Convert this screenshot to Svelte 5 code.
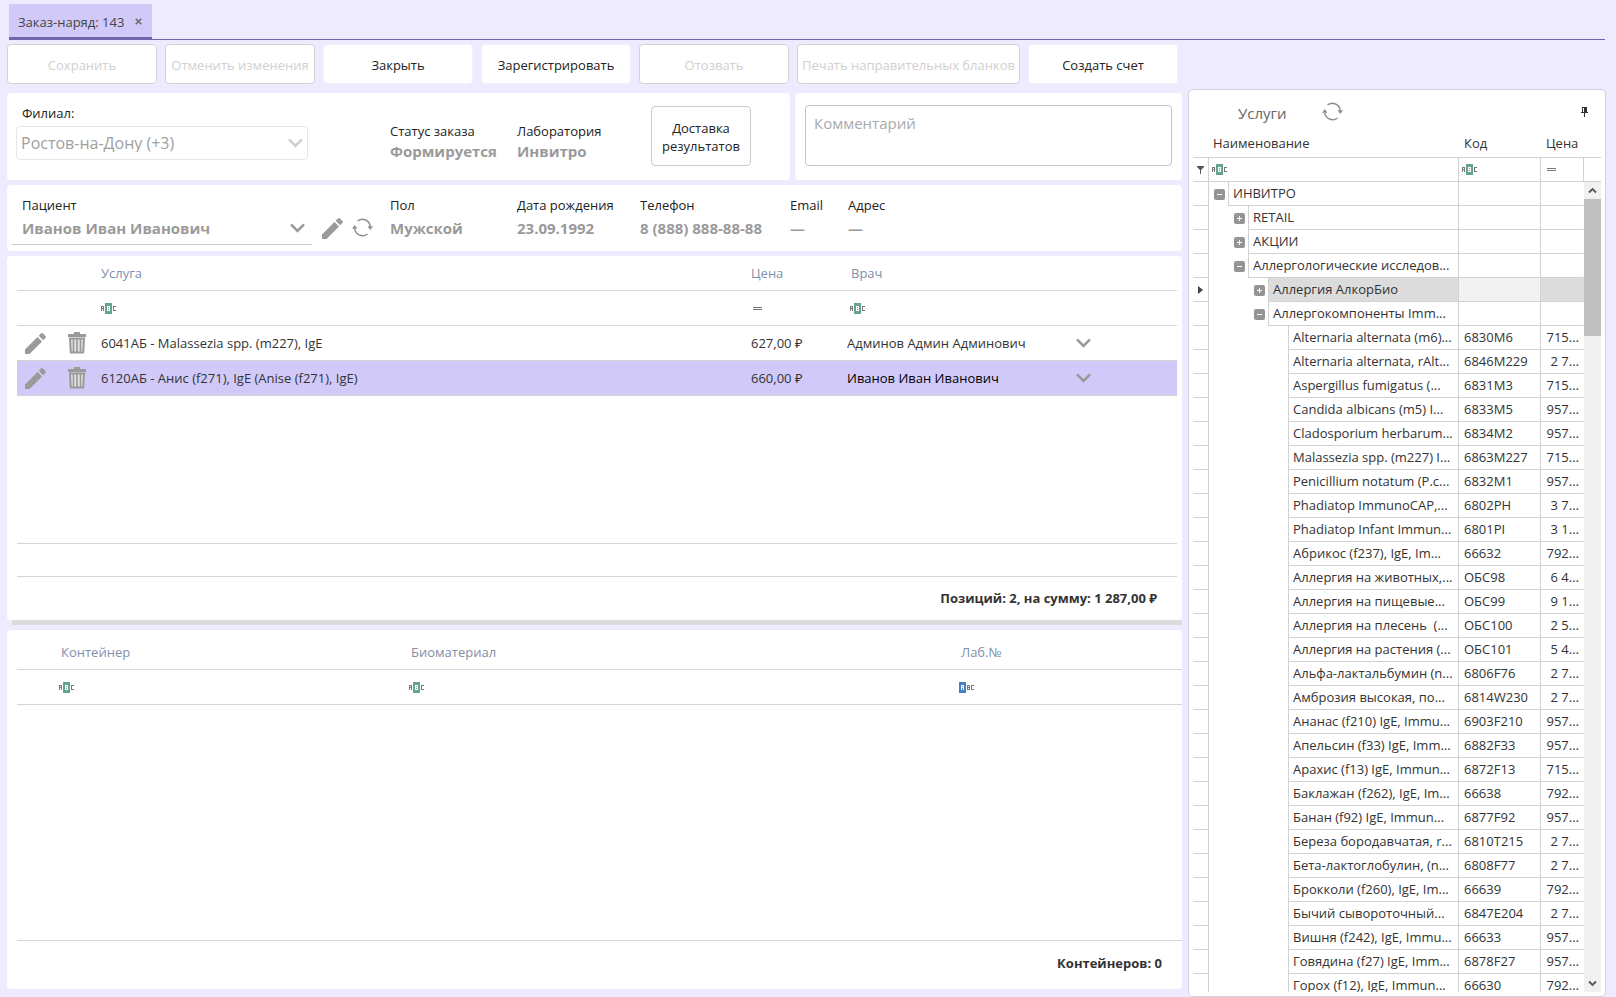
<script>
  const toolbar = [
    { text: 'Сохранить', off: true },
    { text: 'Отменить изменения', off: true },
    { text: 'Закрыть' },
    { text: 'Зарегистрировать' },
    { text: 'Отозвать', off: true },
    { text: 'Печать направительных бланков', off: true, wide: true },
    { text: 'Создать счет' }
  ];

  const services = [
    { name: '6041АБ - Malassezia spp. (m227), IgE', price: '627,00 ₽', doctor: 'Админов Админ Админович' },
    { name: '6120АБ - Анис (f271), IgE (Anise (f271), IgE)', price: '660,00 ₽', doctor: 'Иванов Иван Иванович', selected: true }
  ];

  const tree = [
    ['ИНВИТРО', '', '', 0, '-'],
    ['RETAIL', '', '', 1, '+'],
    ['АКЦИИ', '', '', 1, '+'],
    ['Аллергологические исследов...', '', '', 1, '-'],
    ['Аллергия АлкорБио', '', '', 2, '+'],
    ['Аллергокомпоненты Imm...', '', '', 2, '-'],
    ['Alternaria alternata (m6)...', '6830M6', '715...', 3],
    ['Alternaria alternata, rAlt...', '6846M229', '2 7...', 3],
    ['Aspergillus fumigatus (...', '6831M3', '715...', 3],
    ['Candida albicans (m5) I...', '6833M5', '957...', 3],
    ['Cladosporium herbarum...', '6834M2', '957...', 3],
    ['Malassezia spp. (m227) I...', '6863M227', '715...', 3],
    ['Penicillium notatum (P.c...', '6832M1', '957...', 3],
    ['Phadiatop ImmunoCAP,...', '6802PH', '3 7...', 3],
    ['Phadiatop Infant Immun...', '6801PI', '3 1...', 3],
    ['Абрикос (f237), IgE, Im...', '66632', '792...', 3],
    ['Аллергия на животных,...', 'ОБС98', '6 4...', 3],
    ['Аллергия на пищевые...', 'ОБС99', '9 1...', 3],
    ['Аллергия на плесень  (...', 'ОБС100', '2 5...', 3],
    ['Аллергия на растения (...', 'ОБС101', '5 4...', 3],
    ['Альфа-лактальбумин (n...', '6806F76', '2 7...', 3],
    ['Амброзия высокая, по...', '6814W230', '2 7...', 3],
    ['Ананас (f210) IgE, Immu...', '6903F210', '957...', 3],
    ['Апельсин (f33) IgE, Imm...', '6882F33', '957...', 3],
    ['Арахис (f13) IgE, Immun...', '6872F13', '715...', 3],
    ['Баклажан (f262), IgE, Im...', '66638', '792...', 3],
    ['Банан (f92) IgE, Immun...', '6877F92', '957...', 3],
    ['Береза бородавчатая, r...', '6810T215', '2 7...', 3],
    ['Бета-лактоглобулин, (n...', '6808F77', '2 7...', 3],
    ['Брокколи (f260), IgE, Im...', '66639', '792...', 3],
    ['Бычий сывороточный...', '6847E204', '2 7...', 3],
    ['Вишня (f242), IgE, Immu...', '66633', '957...', 3],
    ['Говядина (f27) IgE, Imm...', '6878F27', '957...', 3],
    ['Горох (f12), IgE, Immun...', '66630', '792...', 3]
  ].map(([name, code, price, level, sign]) => ({ name, code, price, level, sign }));
  const current = 4;
</script>

{#snippet pencil()}
  <svg width="21" height="21" viewBox="0 0 21 21" fill="#9a9a9a" aria-hidden="true">
    <path d="M0 21v-4.500L12.500 4l4.500 4.500L4.500 21zM13.700 2.800l2.200-2.200q1-1 2.100 0l2.400 2.400q1 1 0 2.100l-2.200 2.200z" />
  </svg>
{/snippet}

{#snippet trash()}
  <svg width="18" height="22" viewBox="0 0 18 22" fill="none" aria-hidden="true">
    <path d="M6 0h6v2h6v3H0V2h6z" fill="#9a9a9a" />
    <path d="M2 6.500h14l-.8 14H2.800z" fill="#e2e2e2" stroke="#9a9a9a" stroke-width="2" />
    <path d="M5.500 6v14M9 6v14M12.500 6v14" stroke="#9a9a9a" stroke-width="1.600" />
  </svg>
{/snippet}

{#snippet refresh()}
  <svg width="21" height="19" viewBox="0 0 21 19" fill="none" aria-hidden="true">
    <path d="M5.500 3A8 8 0 0 1 18.300 8.500M15.500 16A8 8 0 0 1 2.700 10.500" stroke="#8f8f8f" stroke-width="1.500" />
    <path d="M15.500 8.200h5.500l-2.700 3.800zM0 10.800h5.500L2.700 7z" fill="#8f8f8f" />
  </svg>
{/snippet}

{#snippet chevron(color)}
  <svg width="15" height="10" viewBox="0 0 15 10" fill="none" aria-hidden="true">
    <path d="M1 1.300l6.500 6.500L14 1.300" stroke={color} stroke-width="2.600" />
  </svg>
{/snippet}

{#snippet contains()}
  <svg width="16" height="11" viewBox="0 0 16 11" fill="none" shape-rendering="crispEdges" aria-hidden="true">
    <path d="M.5 8V3.500h2V8M.5 5.500h2M15 3.500h-2.500v4H15" stroke="#777" />
    <rect x="4" width="7" height="11" rx="1" fill="#63a58d" />
    <path d="M6 3h3v5H6zM7 4v1h1V4zM7 6v1h1V6z" fill="#fff" fill-rule="evenodd" />
  </svg>
{/snippet}

{#snippet startsWith()}
  <svg width="16" height="11" viewBox="0 0 16 11" fill="none" shape-rendering="crispEdges" aria-hidden="true">
    <rect width="7" height="11" rx="1" fill="#467fbd" />
    <path d="M2.500 8V3.500h2V8M2.500 5.500h2" stroke="#fff" />
    <path d="M8.500 3.500h2v4h-2zM8.500 5.500h2M15 3.500h-2.500v4H15" stroke="#777" />
  </svg>
{/snippet}

{#snippet equals()}
  <svg width="9" height="3" viewBox="0 0 9 3" aria-hidden="true">
    <path d="M0 0h9v1H0zM0 2h9v1H0z" fill="#777" />
  </svg>
{/snippet}

{#snippet field(label, value)}
  <div class="field"><span>{label}</span><b>{value}</b></div>
{/snippet}

<div class="app">
  <nav class="tabs">
    <div class="tab">
      <a href="#order">Заказ-наряд: 143</a>
      <button class="icon" aria-label="Закрыть вкладку">
        <svg width="7" height="7" viewBox="0 0 7 7" aria-hidden="true"><path d="M.7.7l5.600 5.600M6.300.7L.7 6.300" stroke="#666" stroke-width="1.500" /></svg>
      </button>
    </div>
  </nav>

  <div class="body">
    <main>
      <div class="toolbar">
        {#each toolbar as b}
          <button class="tool" class:wide={b.wide} disabled={b.off}>{b.text}</button>
        {/each}
      </div>

      <div class="top">
        <section class="card order">
          <div class="branch">
            <label for="branch">Филиал:</label>
            <div class="select">
              <select id="branch" disabled><option>Ростов-на-Дону (+3)</option></select>
              {@render chevron('#d0d0d0')}
            </div>
          </div>
          {@render field('Статус заказа', 'Формируется')}
          {@render field('Лаборатория', 'Инвитро')}
          <button class="delivery">Доставка результатов</button>
        </section>
        <section class="card comment">
          <textarea placeholder="Комментарий" aria-label="Комментарий"></textarea>
        </section>
      </div>

      <section class="card patient">
        <div class="who">
          <label for="patient">Пациент</label>
          <div class="select">
            <select id="patient"><option>Иванов Иван Иванович</option></select>
            {@render chevron('#9a9a9a')}
          </div>
        </div>
        <div class="actions">
          <button class="icon" aria-label="Изменить пациента">{@render pencil()}</button>
          <button class="icon" aria-label="Обновить пациента">{@render refresh()}</button>
        </div>
        {@render field('Пол', 'Мужской')}
        {@render field('Дата рождения', '23.09.1992')}
        {@render field('Телефон', '8 (888) 888-88-88')}
        {@render field('Email', '—')}
        {@render field('Адрес', '—')}
      </section>

      <section class="card services">
        <div class="fill">
          <table class="grid">
            <colgroup><col class="c-edit" /><col class="c-del" /><col /><col class="c-price" /><col class="c-doc" /></colgroup>
            <thead>
              <tr><th></th><th></th><th>Услуга</th><th>Цена</th><th class="doc">Врач</th></tr>
              <tr class="filter"><td></td><td></td><td>{@render contains()}</td><td class="eq">{@render equals()}</td><td class="doc">{@render contains()}</td></tr>
            </thead>
            <tbody>
              {#each services as s}
                <tr class:selected={s.selected}>
                  <td><button class="icon edit" aria-label="Изменить">{@render pencil()}</button></td>
                  <td><button class="icon del" aria-label="Удалить">{@render trash()}</button></td>
                  <td>{s.name}</td>
                  <td>{s.price}</td>
                  <td>
                    <div class="select">
                      <select aria-label="Врач"><option>{s.doctor}</option></select>
                      {@render chevron('#9a9a9a')}
                    </div>
                  </td>
                </tr>
              {/each}
            </tbody>
          </table>
        </div>
        <div class="strip"></div>
        <div class="total">Позиций: 2, на сумму: 1 287,00 ₽</div>
      </section>
      <div class="splitter"></div>

      <section class="card containers">
        <div class="fill">
          <table class="grid">
            <colgroup><col class="k-name" /><col class="k-bio" /><col class="k-lab" /></colgroup>
            <thead>
              <tr><th>Контейнер</th><th>Биоматериал</th><th>Лаб.№</th></tr>
              <tr class="filter"><td>{@render contains()}</td><td>{@render contains()}</td><td>{@render startsWith()}</td></tr>
            </thead>
          </table>
        </div>
        <div class="total">Контейнеров: 0</div>
      </section>
    </main>

    <aside>
      <header>
        <h2>Услуги</h2>
        <button class="icon" aria-label="Обновить услуги">{@render refresh()}</button>
        <button class="icon pin" aria-label="Закрепить">
          <svg width="7" height="10" viewBox="0 0 7 10" aria-hidden="true"><path d="M1 0h5v5h1v1H4v4H3V6H0V5h1zM2 1v4h1V1z" fill="#333" fill-rule="evenodd" /></svg>
        </button>
      </header>
      <div class="treebox">
        <div class="rows">
          <table class="tree">
            <colgroup><col class="t-mark" /><col /><col class="t-code" /><col class="t-price" /><col class="t-bar" /></colgroup>
            <thead>
              <tr><th colspan="2">Наименование</th><th>Код</th><th colspan="2">Цена</th></tr>
              <tr class="filter">
                <td class="mark"><svg width="7" height="8" viewBox="0 0 7 8" aria-hidden="true"><path d="M0 0h7v1L4 4v4H3V4L0 1z" fill="#555" /></svg></td>
                <td>{@render contains()}</td>
                <td>{@render contains()}</td>
                <td class="eq">{@render equals()}</td>
                <td></td>
              </tr>
            </thead>
            <tbody>
              {#each tree as r, i}
                <tr class:current={i === current}>
                  <td class="mark">
                    {#if i === current}<svg width="5" height="8" viewBox="0 0 5 8" aria-hidden="true"><path d="M0 0l5 4-5 4z" fill="#444" /></svg>{/if}
                  </td>
                  <td class="name">
                    <div class="node" style="padding-left: {r.level * 20}px">
                      <span class="expander">
                        {#if r.sign}
                          <button class="icon" aria-label={r.sign === '+' ? 'Развернуть' : 'Свернуть'}>
                            <svg width="11" height="11" viewBox="0 0 11 11" aria-hidden="true">
                              <rect width="11" height="11" rx="2" fill="#949494" />
                              <path d={r.sign === '+' ? 'M3 5h2V3h1v2h2v1H6v2H5V6H3z' : 'M3 5h5v1H3z'} fill="#fff" />
                            </svg>
                          </button>
                        {/if}
                      </span>
                      <span class="label">{r.name}</span>
                    </div>
                  </td>
                  <td class="code">{r.code}</td>
                  <td class="price">{r.price}</td>
                  <td class="void"></td>
                </tr>
              {/each}
            </tbody>
          </table>
        </div>
        <div class="scroll" aria-hidden="true">
          <svg width="17" height="17" viewBox="0 0 17 17"><path d="M5 10.500L8.500 7l3.500 3.500" fill="none" stroke="#555" stroke-width="1.800" /></svg>
          <div class="thumb"></div>
          <svg width="17" height="17" viewBox="0 0 17 17"><path d="M5 6.500L8.500 10 12 6.500" fill="none" stroke="#555" stroke-width="1.800" /></svg>
        </div>
      </div>
    </aside>
  </div>
</div>

<style>
  :global(body) { background: #eeebff; }
  * { box-sizing: border-box; }
  .app {
    height: 100vh;
    overflow: hidden;
    display: flex;
    flex-direction: column;
    background: #eeebff;
    color: #333;
    font: 13px/18px "Open Sans", "Noto Sans", sans-serif;
  }
  button, select, textarea { font: inherit; color: inherit; margin: 0; }
  svg { display: block; flex: none; }
  .icon { display: block; border: 0; padding: 0; background: none; }

  .tabs { display: flex; margin: 0 11px 0 9px; padding-top: 4px; border-bottom: 1px solid #7365ad; }
  .tab {
    display: flex;
    align-items: center;
    gap: 11px;
    height: 36px;
    margin-bottom: -1px;
    padding: 2px 10px 0 9px;
    background: #d1caf9;
    border-bottom: 3px solid #7365ad;
  }
  .tab a { color: #444; text-decoration: none; }

  .body { flex: 1; min-height: 0; display: flex; gap: 6px; padding: 4px 10px 0 7px; }
  main { flex: 1; min-width: 0; display: flex; flex-direction: column; padding-bottom: 8px; }

  .toolbar { display: flex; gap: 8px; margin-bottom: 9px; }
  .tool {
    width: 150px;
    height: 40px;
    padding: 2px 0 0;
    border: 1px solid #f3f1fd;
    border-radius: 4px;
    background: #fff;
    color: #222;
    white-space: nowrap;
  }
  .tool.wide { width: 223px; }
  .tool:disabled { border-color: #d3d3d3; color: #d0d0d0; }

  .card { background: #fff; border-radius: 4px; }
  .top { display: flex; gap: 5px; height: 87px; margin-bottom: 5px; }
  .order { flex: 2; display: grid; grid-template-columns: 374px 127px 134px 100px 1fr; align-items: start; padding-left: 9px; }
  .branch { padding-top: 11px; }
  .branch label { display: block; padding-left: 6px; color: #222; }
  .branch .select { width: 292px; height: 34px; margin-top: 4px; padding: 0 4px; border: 1px solid #e6e6e6; border-radius: 4px; }
  .select { display: flex; align-items: center; }
  .select select { flex: 1; min-width: 0; appearance: none; border: 0; padding: 0; background: none; outline: 0; }
  .branch select { font-size: 16px; color: #a0a0a0; opacity: 1; }
  .field { display: flex; flex-direction: column; color: #222; white-space: nowrap; }
  .field b { padding-top: 4px; font-size: 15px; line-height: 20px; color: #9a9a9a; }
  .order .field { padding-top: 29px; }
  .order .field b { padding-top: 1px; }
  .delivery { height: 60px; margin-top: 13px; padding: 2px 10px 0; border: 1px solid #ccc; border-radius: 4px; background: #fff; color: #222; }
  .comment { flex: 1; max-width: 387px; min-width: 387px; padding: 12px 10px 14px; }
  textarea { display: block; width: 100%; height: 61px; padding: 7px 8px; border: 1px solid #c4c4c4; border-radius: 4px; resize: none; font-size: 15px; line-height: 20px; background: #fff; }
  textarea::placeholder { color: #aaa; opacity: 1; }

  .patient { display: grid; grid-template-columns: 300px 78px 127px 123px 150px 58px 1fr; height: 66px; margin-bottom: 5px; padding: 11px 0 0 5px; }
  .who label { display: block; padding-left: 10px; color: #222; }
  .who .select { height: 31px; padding: 0 7px 3px 10px; border-bottom: 1px solid #ccc; }
  .who select { font-size: 15px; font-weight: 700; color: #9a9a9a; }
  .actions { display: flex; gap: 9px; padding: 22px 0 0 10px; align-items: flex-start; }

  .fill { flex: 1; border-bottom: 1px solid #d5d5d5; }
  .grid, .tree { width: 100%; table-layout: fixed; border-collapse: separate; border-spacing: 0; }
  .grid th, .grid td { height: 35px; padding: 0; border-bottom: 1px solid #d5d5d5; text-align: left; white-space: nowrap; overflow: hidden; }
  .grid th { height: 34px; padding-bottom: 2px; color: #7f8fa9; font-weight: 400; }
  .services { height: 364px; display: flex; flex-direction: column; padding: 1px 5px 0 10px; }
  .c-edit { width: 40px; }
  .c-del { width: 44px; }
  .c-price { width: 96px; }
  .c-doc { width: 330px; }
  .grid th.doc { padding-left: 4px; }
  .grid td.doc { padding-left: 3px; }
  .grid .eq { padding-left: 2px; }
  .edit { margin-left: 8px; }
  .del { margin-left: 11px; }
  .grid .select select { flex: 0 0 229px; }
  .selected td { background: #d1caf9; }
  .selected select { color: #000; }
  .strip { height: 33px; border-bottom: 1px solid #d5d5d5; }
  .total { font-weight: 700; text-align: right; }
  .services .total { height: 43px; padding: 12px 20px 0 0; }
  .splitter { flex: none; height: 5px; margin: 0 0 5px 5px; background: #dcdcdc; }
  .containers { flex: 1; display: flex; flex-direction: column; padding: 6px 0 0 10px; }
  .containers .total { height: 48px; padding: 13px 20px 0 0; }
  .containers th { padding-left: 44px; }
  .containers td { padding-left: 42px; }
  .k-name { width: 350px; }
  .k-bio { width: 550px; }

  aside {
    flex: none;
    width: 418px;
    margin-top: 45px;
    padding: 0 4px 4px;
    display: flex;
    flex-direction: column;
    background: #fff;
    border: 1px solid #d4d2de;
    border-radius: 5px;
  }
  aside header { display: flex; align-items: center; height: 43px; padding: 0 13px 0 45px; }
  h2 { width: 84px; margin: 0; padding-top: 2px; font-size: 15px; font-weight: 400; color: #666; }
  .pin { margin-left: auto; }
  .treebox { position: relative; flex: 1; min-height: 0; }
  .rows { height: 100%; overflow: hidden; }
  .t-mark { width: 16px; }
  .t-code { width: 82px; }
  .t-price { width: 43px; }
  .t-bar { width: 17px; }
  .tree th { height: 25px; padding: 0 0 4px 5px; border-bottom: 1px solid #d2d2d2; text-align: left; font-weight: 400; }
  .tree th:first-child { padding-left: 20px; }
  .tree td { height: 24px; padding: 0; border-right: 1px solid #d2d2d2; border-bottom: 1px solid #d2d2d2; white-space: pre; overflow: hidden; }
  .tree td:last-child { border-right: 0; }
  .tree .filter td:not(.mark) { padding-left: 3px; }
  .tree .filter td.eq { padding-left: 6px; }
  .mark svg { margin: 0 auto; }
  .tree .name { border-bottom: 0; }
  .node { display: flex; height: 24px; }
  .expander { flex: none; width: 20px; padding: 7px 0 0 5px; border-right: 1px solid #d2d2d2; }
  .label { flex: 1; height: 24px; padding-left: 4px; line-height: 23px; border-bottom: 1px solid #d2d2d2; }
  .tree .code { padding-left: 5px; line-height: 23px; }
  .tree .price { padding-right: 4px; line-height: 23px; text-align: right; border-right-color: transparent; }
  .current .label, .current .price { background: #dcdcdc; }
  .current .code { background: #f2f2f2; }
  .scroll {
    position: absolute;
    top: 49px;
    right: 0;
    bottom: 0;
    width: 17px;
    display: flex;
    flex-direction: column;
    background: #f0f0f0;
  }
  .thumb { flex: none; height: 137px; margin-bottom: auto; background: #c0c0c0; }
</style>
